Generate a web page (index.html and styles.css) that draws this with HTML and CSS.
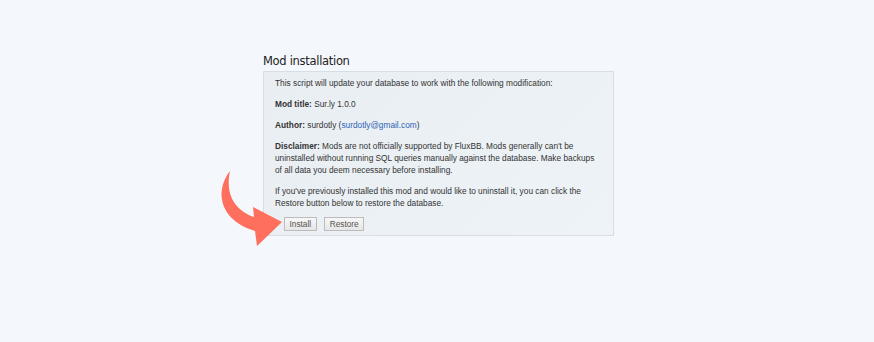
FILE: index.html
```html
<!DOCTYPE html>
<html lang="en">
<head>
    <meta charset="UTF-8">
    <meta name="viewport" content="width=device-width, initial-scale=1.0">
    <title>Mod installation</title>
    <link rel="stylesheet" href="styles.css">
</head>
<body>
    <div class="page">
        <div class="blockform">
            <h2>Mod installation</h2>
            <div class="box">
                <p>This script will update your database to work with the following modification:</p>
                <p><strong>Mod title:</strong> Sur.ly 1.0.0</p>
                <p><strong>Author:</strong> surdotly (<a href="#">surdotly@gmail.com</a>)</p>
                <p><strong>Disclaimer:</strong> Mods are not officially supported by FluxBB. Mods generally can't be uninstalled without running SQL queries manually against the database. Make backups of all data you deem necessary before installing.</p>
                <p class="last">If you've previously installed this mod and would like to uninstall it, you can click the Restore button below to restore the database.</p>
                <div class="buttons">
                    <button type="button">Install</button>
                    <button type="button">Restore</button>
                </div>
            </div>
        </div>
    </div>
    <svg class="arrow" width="80" height="85" viewBox="0 0 80 85">
        <path d="M20,6 C5,25 8,55 45,66 L47,81 L72,57 L43,42 L44,52 C25,45 15,30 20,6 Z" fill="#ff6f5e"/>
    </svg>
</body>
</html>
```

FILE: styles.css
```css
html{
    background-color: #f4f8fc;
}
body{
    margin: 0;
    font-family: "Liberation Sans", Arial, sans-serif;
}
.page{
    padding-top: 54px;
}
.blockform{
    width: 351px;
    margin: 0 0 0 263px;
}
h2{
    font-family: "DejaVu Sans", sans-serif;
    font-weight: normal;
    font-size: 11.5px;
    color: #222;
    margin: 0 0 3px 0;
    letter-spacing: -0.3px;
}
.box{
    border: 1px solid #d6dee6;
    background: linear-gradient(135deg, #e9eef2, #eef3f7);
    padding: 5px 11px 4px 11px;
}
.box p{
    font-size: 8.3px;
    line-height: 12px;
    color: #333;
    margin: 0 0 9px 0;
}
.box p.last{
    margin-bottom: 4px;
}
.box a{
    color: #2f63b5;
    text-decoration: none;
}
.buttons{
    padding-left: 9px;
}
button{
    font-family: "Liberation Sans", Arial, sans-serif;
    font-size: 8.3px;
    color: #555;
    height: 14px;
    padding: 0 4.5px;
    border: 1px solid #bcbcbc;
    background: linear-gradient(#f7f7f7, #e6e6e6);
    margin-right: 3px;
}
.arrow{
    position: absolute;
    left: 210px;
    top: 165px;
}
```
